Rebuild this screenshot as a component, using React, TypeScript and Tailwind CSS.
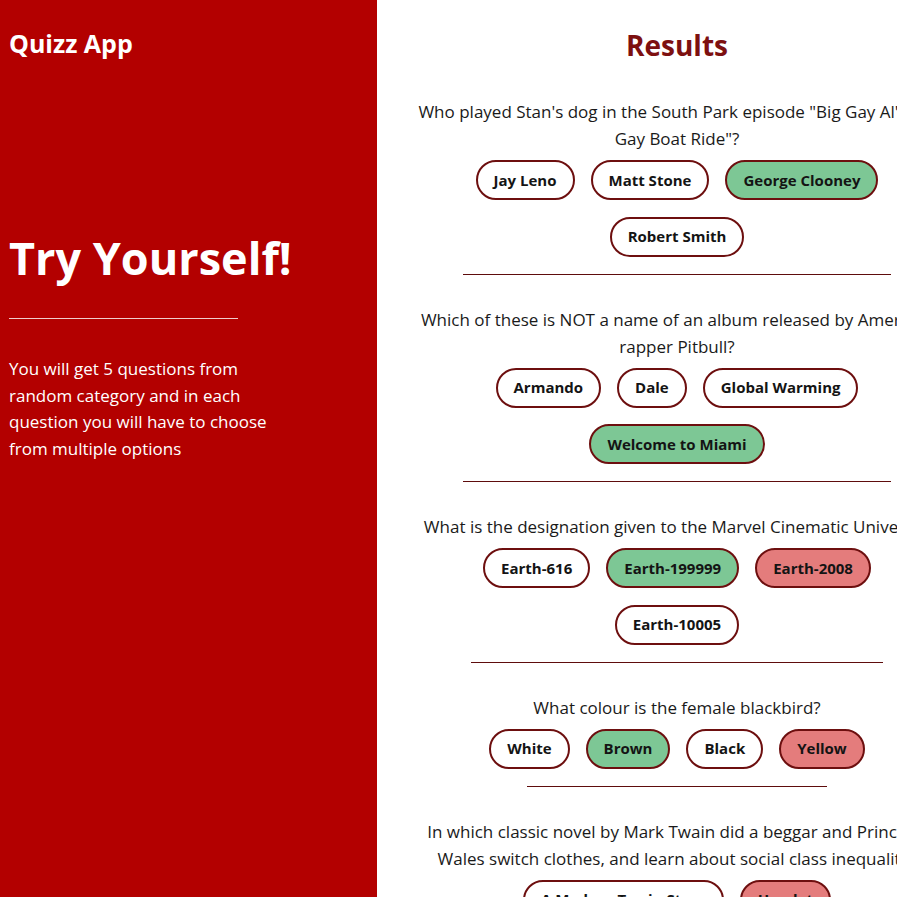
import React from 'react';

type Question = {
  text: string;
  answers: { label: string; state?: 'right' | 'wrong' }[];
};

const questions: Question[] = [
  {
    text: 'Who played Stan\'s dog in the South Park episode "Big Gay Al\'s Big Gay Boat Ride"?',
    answers: [{ label: 'Jay Leno' }, { label: 'Matt Stone' }, { label: 'George Clooney', state: 'right' }, { label: 'Robert Smith' }],
  },
  {
    text: 'Which of these is NOT a name of an album released by American rapper Pitbull?',
    answers: [{ label: 'Armando' }, { label: 'Dale' }, { label: 'Global Warming' }, { label: 'Welcome to Miami', state: 'right' }],
  },
  {
    text: 'What is the designation given to the Marvel Cinematic Universe?',
    answers: [{ label: 'Earth-616' }, { label: 'Earth-199999', state: 'right' }, { label: 'Earth-2008', state: 'wrong' }, { label: 'Earth-10005' }],
  },
  {
    text: 'What colour is the female blackbird?',
    answers: [{ label: 'White' }, { label: 'Brown', state: 'right' }, { label: 'Black' }, { label: 'Yellow', state: 'wrong' }],
  },
  {
    text: 'In which classic novel by Mark Twain did a beggar and Prince of Wales switch clothes, and learn about social class inequality?',
    answers: [{ label: 'A Modern Twain Story' }, { label: 'Hamlet', state: 'wrong' }, { label: 'The Prince and the Pauper', state: 'right' }, { label: 'Tom Sawyer' }],
  },
];

function Answer({ label, state }: { label: string; state?: 'right' | 'wrong' }) {
  const bg = state === 'right' ? 'bg-[#7dc795]' : state === 'wrong' ? 'bg-[#e47c7c]' : 'bg-white';
  return (
    <div className={`h-10 px-4 flex items-center rounded-full border-2 border-[#6d0f0f] text-[15px] font-bold text-[#141414] ${bg}`}>
      {label}
    </div>
  );
}

export default function App() {
  return (
    <div className="flex h-screen w-screen overflow-hidden font-['Open_Sans',sans-serif]">
      <div className="w-[377px] shrink-0 bg-[#b30000] text-white px-[9px]">
        <h2 className="text-[25px] font-bold pt-[24px] leading-[38px]">Quizz App</h2>
        <h1 className="text-[45px] font-bold mt-[167px] leading-[58px]">Try Yourself!</h1>
        <hr className="w-[229px] border-t border-white/80 mt-[31px]" />
        <p className="w-[272px] text-[17px] leading-[26.7px] mt-[37px]">
          You will get 5 questions from random category and in each question you will have to choose from multiple options
        </p>
      </div>
      <div className="w-[600px] shrink-0 bg-white text-center">
        <h1 className="text-[28px] font-bold text-[#7d1010] pt-[24px] leading-[42px]">Results</h1>
        <div className="mt-[32px] space-y-[31px]">
          {questions.map((q, i) => (
            <div key={i} className="w-fit max-w-[536px] mx-auto">
              <p className="text-[17px] leading-[27px] text-[#1a1a1a]">{q.text}</p>
              <div className="mt-2 max-w-[516px] mx-auto flex flex-wrap justify-center gap-x-4 gap-y-[16.5px]">
                {q.answers.map(a => (
                  <Answer key={a.label} label={a.label} state={a.state} />
                ))}
              </div>
              <hr className="w-4/5 mx-auto mt-[17px] border-t border-[#5e0c0c]" />
            </div>
          ))}
        </div>
      </div>
    </div>
  );
}
